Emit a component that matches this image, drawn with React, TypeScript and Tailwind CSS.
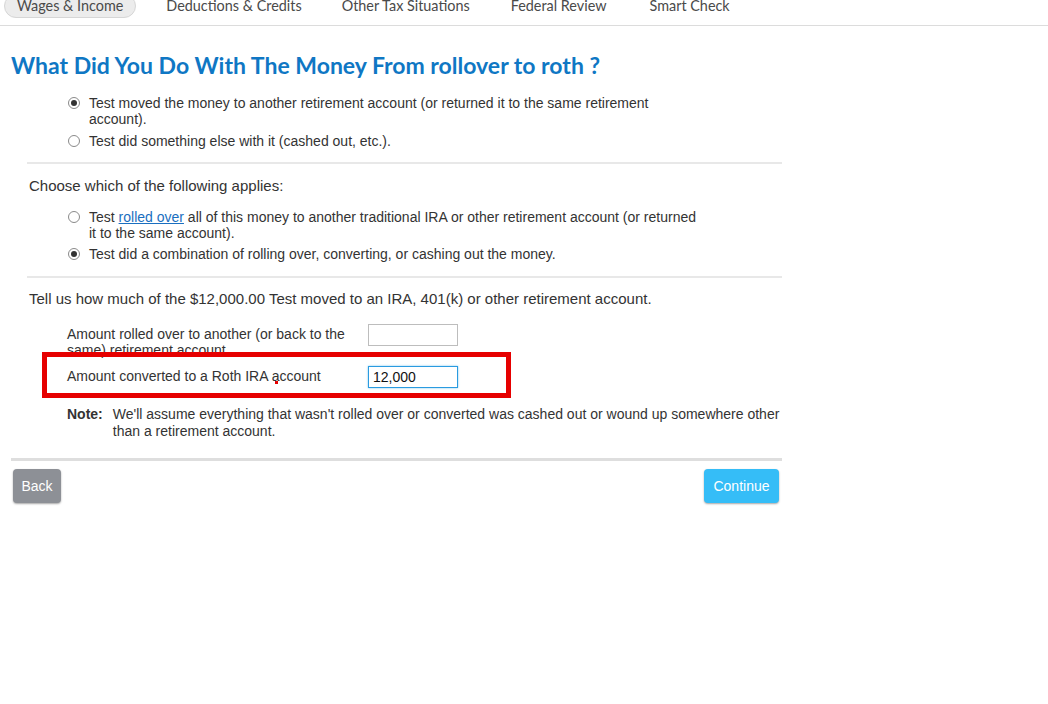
import React from "react";

function Radio({ checked }: { checked?: boolean }) {
  return (
    <span className="mt-[2px] flex h-[12px] w-[12px] shrink-0 items-center justify-center rounded-full border border-[#8a8a8a] bg-white">
      {checked && <span className="h-[6px] w-[6px] rounded-full bg-[#333]" />}
    </span>
  );
}

function Option({ checked, children }: { checked?: boolean; children: React.ReactNode }) {
  return (
    <div className="flex gap-[9px] pl-[41px]">
      <Radio checked={checked} />
      <div className="w-[610px] text-[14px] leading-[16px] text-[#333]">{children}</div>
    </div>
  );
}

export default function App() {
  const tabs = ["Wages & Income", "Deductions & Credits", "Other Tax Situations", "Federal Review", "Smart Check"];
  const margins = ["ml-0", "ml-[17px]", "ml-[14px]", "ml-[15px]", "ml-[17px]"];
  return (
    <div className="relative h-[704px] w-[1048px] overflow-hidden bg-white" style={{ fontFamily: '"Liberation Sans", Arial, sans-serif' }}>
      {/* top nav */}
      <div className="flex h-[26px] items-start border-b border-[#dcdcdc] pl-[4px]" style={{ fontFamily: 'Lato, "Open Sans", sans-serif' }}>
        {tabs.map((t, i) => (
          <div
            key={t}
            className={
              (i === 0
                ? "rounded-full border border-[#d6d6d6] bg-[#ececec] "
                : "border border-transparent ") +
              margins[i] +
              " mt-[-6px] flex h-[24px] items-center px-[12px] text-[14.4px] text-[#4a4a4a]"
            }
          >
            {t}
          </div>
        ))}
      </div>

      <div className="w-[782px]">
        <h1
          className="ml-[11px] mt-[26px] text-[23px] font-bold leading-[26px] text-[#0f77c4]"
          style={{ fontFamily: 'Lato, "Open Sans", sans-serif' }}
        >
          What Did You Do With The Money From rollover to roth ?
        </h1>

        <div className="ml-[27px] mt-[17px] flex flex-col gap-[6px]">
          <Option checked>
            Test moved the money to another retirement account (or returned it to the same retirement account).
          </Option>
          <Option>Test did something else with it (cashed out, etc.).</Option>
        </div>

        <div className="ml-[27px] mt-[13px] h-[2px] bg-[#e8e8e8]" />

        <div className="ml-[29px] mt-[13px] text-[15px] leading-[18px] text-[#333]">Choose which of the following applies:</div>

        <div className="ml-[27px] mt-[14px] flex flex-col gap-[5px]">
          <Option>
            Test{" "}
            <a href="#" className="text-[#1a6fc0] underline">
              rolled over
            </a>{" "}
            all of this money to another traditional IRA or other retirement account (or returned it to the same account).
          </Option>
          <Option checked>Test did a combination of rolling over, converting, or cashing out the money.</Option>
        </div>

        <div className="ml-[27px] mt-[14px] h-[2px] bg-[#e8e8e8]" />

        <div className="ml-[29px] mt-[12px] text-[15px] leading-[18px] text-[#333]">
          Tell us how much of the $12,000.00 Test moved to an IRA, 401(k) or other retirement account.
        </div>

        <div className="ml-[67px] mt-[16px] flex flex-col text-[14px] leading-[16px] text-[#333]">
          <div className="flex h-[42px] items-start">
            <div className="mt-[2px] w-[301px]">
              Amount rolled over to another (or back to the same) retirement account
            </div>
            <input className="h-[22px] w-[90px] border border-[#bdbdbd] px-[4px] text-[14px] outline-none" />
          </div>
          <div className="flex h-[40px] items-start">
            <div className="mt-[2px] w-[301px]">Amount converted to a Roth IRA account</div>
            <input
              defaultValue="12,000"
              className="h-[22px] w-[90px] border border-[#2a9be0] px-[4px] text-[14px] text-[#111] outline-none shadow-[0_0_2px_#7cc8f0]"
            />
          </div>
          <div className="flex gap-[10px] leading-[17px]">
            <span className="font-bold">Note:</span>
            <span className="w-[680px]">
              We'll assume everything that wasn't rolled over or converted was cashed out or wound up somewhere other than a retirement account.
            </span>
          </div>
        </div>

        <div className="ml-[11px] mt-[18px] h-[3px] bg-[#dedede]" />

        <div className="ml-[13px] mt-[8px] flex justify-between">
          <button className="h-[34px] w-[48px] rounded-[4px] bg-[#8d9096] text-[14px] text-white shadow-[0_1px_2px_rgba(0,0,0,0.35)]" style={{ fontFamily: '"Liberation Sans Narrow", "Liberation Sans", sans-serif' }}>
            Back
          </button>
          <button className="mr-[3px] h-[34px] w-[75px] rounded-[4px] bg-[#35bdf7] text-[14px] text-white shadow-[0_1px_2px_rgba(0,0,0,0.35)]" style={{ fontFamily: '"Liberation Sans Narrow", "Liberation Sans", sans-serif' }}>
            Continue
          </button>
        </div>
      </div>

      {/* annotation overlay */}
      <div className="absolute left-[42px] top-[352px] h-[46px] w-[469px] border-[5px] border-[#e60000]" />
      <div className="absolute left-[275px] top-[381px] h-[3px] w-[3px] bg-[#e60000]" />
    </div>
  );
}
